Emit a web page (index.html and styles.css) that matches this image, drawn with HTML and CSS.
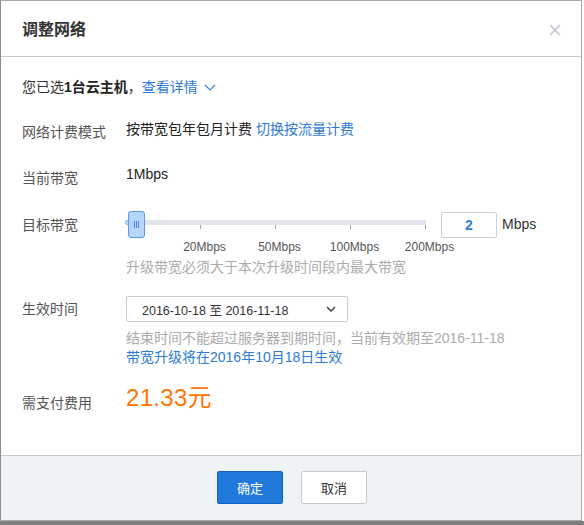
FILE: index.html
```html
<!DOCTYPE html>
<html lang="zh-CN">
<head>
<meta charset="utf-8">
<title>调整网络</title>
<link rel="stylesheet" href="styles.css">
</head>
<body>
<div class="dialog">
  <div class="head">
    <h1 class="title">调整网络</h1>
    <svg class="close" width="12" height="12" viewBox="0 0 12 12"><path d="M1 1L11 11M11 1L1 11" stroke="#b9c0ca" stroke-width="1.4" fill="none"/></svg>
  </div>
  <div class="body">
    <div class="selected">您已选<b>1台云主机</b>，<a class="link">查看详情</a><svg class="chev" width="12" height="7" viewBox="0 0 12 7"><path d="M1 1L6 6L11 1" stroke="#3b82d6" stroke-width="1.2" fill="none"/></svg></div>

    <div class="row r1">
      <div class="label">网络计费模式</div>
      <div class="value">按带宽包年包月计费 <a class="link">切换按流量计费</a></div>
    </div>

    <div class="row r2">
      <div class="label l2">当前带宽</div>
      <div class="value">1Mbps</div>
    </div>

    <div class="row r3">
      <div class="label l3">目标带宽</div>
      <div class="col">
        <div class="sliderline">
          <div class="slider">
            <div class="track"></div>
            <div class="ticks"></div>
            <span class="dot"></span>
            <div class="handle"><i></i><i></i><i></i></div>
          </div>
          <div class="numbox">2</div>
          <div class="unit">Mbps</div>
        </div>
        <div class="scale"><span>20Mbps</span><span>50Mbps</span><span>100Mbps</span><span>200Mbps</span></div>
        <div class="hint h1">升级带宽必须大于本次升级时间段内最大带宽</div>
      </div>
    </div>

    <div class="row r4">
      <div class="label l4">生效时间</div>
      <div class="col">
        <div class="select"><span>2016-10-18 至 2016-11-18</span><svg width="10" height="6" viewBox="0 0 10 6"><path d="M1 1L5 5L9 1" stroke="#444" stroke-width="1.5" fill="none"/></svg></div>
        <div class="hint h2">结束时间不能超过服务器到期时间，当前有效期至2016-11-18</div>
        <div class="note">带宽升级将在2016年10月18日生效</div>
      </div>
    </div>

    <div class="row r5">
      <div class="label l5">需支付费用</div>
      <div class="price">21.33元</div>
    </div>
  </div>
  <div class="foot">
    <button class="btn primary">确定</button>
    <button class="btn">取消</button>
  </div>
</div>
<div class="shade"></div>
</body>
</html>
```

FILE: styles.css
```css
* { box-sizing: border-box; }
html, body { margin: 0; padding: 0; }
body {
  width: 584px;
  height: 525px;
  background: #fff;
  font-family: "Liberation Sans", "Noto Sans CJK SC", sans-serif;
  font-size: 14px;
  color: #333;
  overflow: hidden;
}
.dialog {
  width: 582px;
  height: 521px;
  border: 1px solid #a9a9a9;
  border-left-color: #8c8c8c;
  display: flex;
  flex-direction: column;
  background: #fff;
}
.shade {
  height: 4px;
  background: #7f7f7f;
}
.head {
  height: 56px;
  border-bottom: 1px solid #c9c9c9;
  display: flex;
  align-items: center;
  justify-content: space-between;
  padding: 2px 20px 0 21px;
}
.title {
  margin: 0;
  font-size: 16px;
  font-weight: bold;
  color: #333;
  line-height: 22px;
}
.close { display: block; }
.body {
  height: 399px;
  border-bottom: 1px solid #c9c9c9;
  padding: 0 0 0 21px;
}
.link { color: #2d7bd6; text-decoration: none; }
.selected {
  margin-top: 20px;
  line-height: 20px;
  color: #333;
  display: flex;
  align-items: center;
}
.selected b { font-weight: bold; color: #222; }
.chev { margin-left: 6px; margin-top: 1px; }
.row {
  display: flex;
  align-items: flex-start;
}
.label {
  width: 104px;
  flex: none;
  line-height: 20px;
  color: #555;
  margin-top: 3px;
}
.value { line-height: 20px; color: #222; }
.r1 { margin-top: 22px; }
.r2 { margin-top: 22px; }
.l2 { margin-top: 4px; }
.r3 { margin-top: 23px; }
.l3 { margin-top: 4px; }
.col { display: flex; flex-direction: column; }
.sliderline { display: flex; align-items: flex-start; }
.slider {
  position: relative;
  width: 300px;
  height: 27px;
}
.track {
  margin: 9px 0 0 1px;
  width: 299px;
  height: 5px;
  background: #e1e4ea;
}
.ticks {
  margin-left: 1px;
  width: 300px;
  height: 4px;
  background: repeating-linear-gradient(to right, transparent 0 73px, #a3a3a3 73px 74px, transparent 74px 75px);
}
.dot {
  position: absolute;
  left: -1px;
  top: 9px;
  width: 5px;
  height: 5px;
  border-radius: 50%;
  background: #c8defa;
  border: 1px solid #7fb0ea;
}
.handle {
  position: absolute;
  left: 2px;
  top: 0;
  width: 17px;
  height: 27px;
  background: #b5d5fb;
  border: 1px solid #5a9be3;
  border-radius: 3px;
  display: flex;
  justify-content: center;
  align-items: center;
  gap: 1px;
}
.handle i {
  display: block;
  width: 1px;
  height: 7px;
  background: #4f86c9;
}
.numbox {
  margin: 1px 0 0 15px;
  width: 56px;
  height: 26px;
  border: 1px solid #cfcfcf;
  border-radius: 2px;
  display: flex;
  align-items: center;
  justify-content: center;
  color: #2f7fd8;
  font-weight: bold;
  font-size: 14px;
}
.unit {
  margin: 3px 0 0 5px;
  line-height: 20px;
  color: #333;
}
.scale {
  margin-top: 2px;
  padding-left: 41px;
  display: flex;
  height: 14px;
  line-height: 14px;
  font-size: 12px;
  color: #555;
}
.scale span { width: 75px; text-align: center; }
.hint { color: #ababab; }
.h1 { margin-top: 3px; line-height: 20px; }
.r4 { margin-top: 19px; }
.l4 { margin-top: 3px; }
.select {
  width: 222px;
  height: 26px;
  border: 1px solid #cccccc;
  border-radius: 2px;
  display: flex;
  align-items: center;
  justify-content: space-between;
  padding: 0 11px 0 15px;
  font-size: 12.5px;
  color: #333;
}
.select svg { display: block; }
.h2 { margin-top: 6.5px; line-height: 19px; }
.note { color: #2d7bd6; line-height: 19px; }
.r5 { margin-top: 16px; }
.l5 { margin-top: 10px; }
.price {
  font-size: 24px;
  line-height: 30px;
  color: #ff7405;
  letter-spacing: 0.3px;
}
.foot {
  flex: 1;
  background: #eff3f6;
  display: flex;
  justify-content: center;
  align-items: flex-start;
  gap: 18px;
  padding: 15px 0 0 2px;
}
.btn {
  width: 66px;
  height: 33px;
  border: 1px solid #c5cad1;
  border-radius: 2px;
  background: #fff;
  color: #333;
  font-family: "Liberation Sans", "Noto Sans CJK SC", sans-serif;
  font-size: 13px;
  padding: 0;
}
.btn.primary {
  background: #2179dc;
  border-color: #1462bd;
  color: #fff;
}
```
